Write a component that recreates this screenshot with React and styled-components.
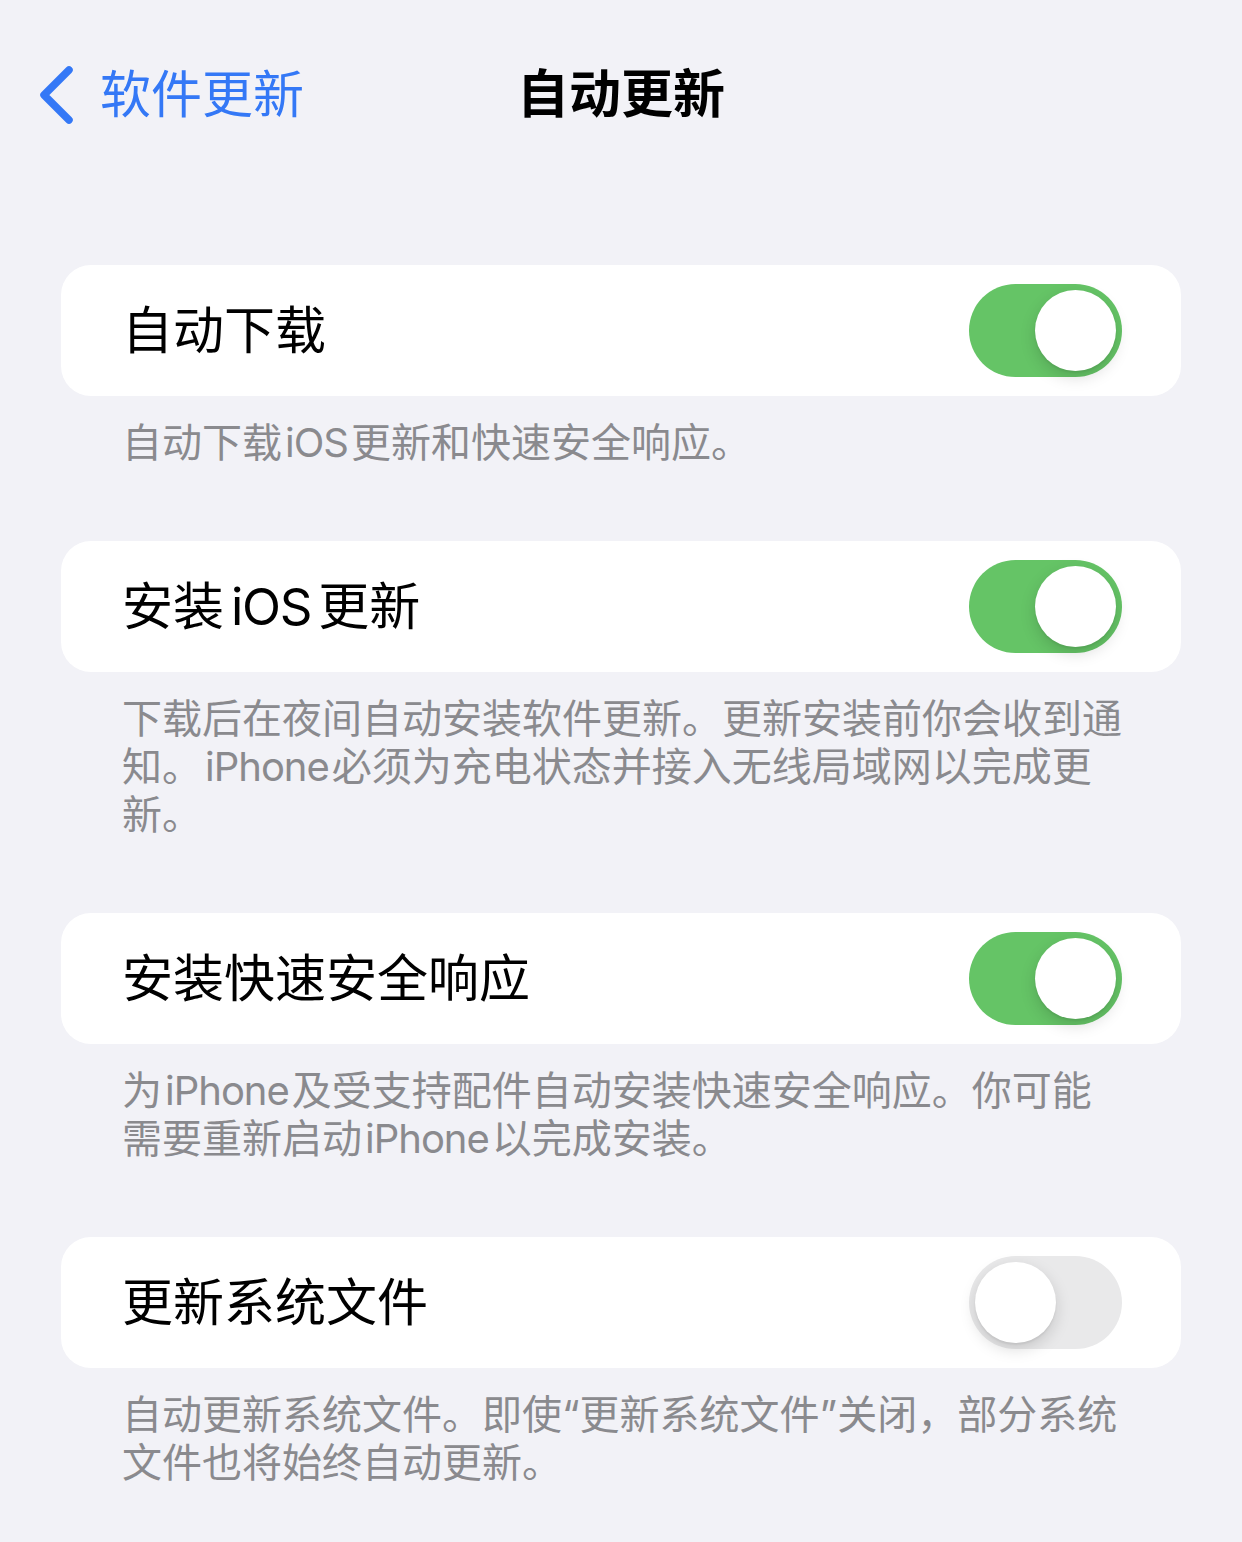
import React, { useState } from "react";
import styled, { createGlobalStyle } from "styled-components";

const GlobalStyle = createGlobalStyle`
  html, body {
    margin: 0;
    padding: 0;
    background: #f2f2f7;
  }
  body {
    font-family: "Inter", "Noto Sans CJK SC", "Noto Sans", sans-serif;
    -webkit-font-smoothing: antialiased;
  }
`;

const Page = styled.div`
  min-height: 100vh;
  background: #f2f2f7;
  display: flex;
  flex-direction: column;
`;

const NavBar = styled.header`
  position: relative;
  height: 190px;
  display: flex;
  align-items: center;
  justify-content: center;
`;

const BackButton = styled.button`
  position: absolute;
  left: 38px;
  top: 50%;
  transform: translateY(-50%);
  display: flex;
  align-items: center;
  gap: 26px;
  background: none;
  border: none;
  padding: 0;
  color: #3478f6;
  font-family: inherit;
  font-size: 51px;
  line-height: 60px;
  cursor: pointer;
`;

const Title = styled.h1`
  margin: 0;
  font-size: 52px;
  font-weight: 700;
  color: #000;
  line-height: 60px;
`;

const Content = styled.main`
  padding: 75px 61px 40px;
  display: flex;
  flex-direction: column;
`;

const Section = styled.section`
  display: flex;
  flex-direction: column;
`;

const Card = styled.div`
  background: #fff;
  border-radius: 30px;
  height: 131px;
  display: flex;
  align-items: center;
  justify-content: space-between;
  padding: 0 59px 0 61px;
`;

const Label = styled.span`
  font-size: 51px;
  color: #000;
  line-height: 60px;
`;

/* Latin runs inside Chinese text get a little breathing room, as iOS does */
const Latin = styled.span`
  margin: 0 ${(p) => p.$gap}px;
  letter-spacing: -0.025em;
`;

const Footer = styled.p`
  margin: 0;
  padding: 23px 55px 74px 61px;
  font-size: 40px;
  line-height: 48px;
  color: #8a8a8e;
`;

const Track = styled.button`
  position: relative;
  width: 153px;
  height: 93px;
  border: none;
  border-radius: 47px;
  padding: 0;
  background: ${(p) => (p.$on ? "#65c466" : "#e9e9ea")};
  cursor: pointer;
  flex-shrink: 0;
`;

const Knob = styled.span`
  position: absolute;
  top: 6px;
  left: ${(p) => (p.$on ? "66px" : "6px")};
  width: 81px;
  height: 81px;
  border-radius: 50%;
  background: #fff;
  box-shadow: 0 6px 16px rgba(0, 0, 0, 0.15), 0 2px 2px rgba(0, 0, 0, 0.06);
`;

function Toggle({ on, onChange }) {
  return (
    <Track $on={on} onClick={() => onChange(!on)} aria-pressed={on}>
      <Knob $on={on} />
    </Track>
  );
}

function Chevron() {
  return (
    <svg width="36" height="58" viewBox="0 0 36 58" fill="none">
      <path
        d="M31 4 L6 29 L31 54"
        stroke="#3478f6"
        strokeWidth="7.5"
        strokeLinecap="round"
        strokeLinejoin="round"
      />
    </svg>
  );
}

// Split mixed text so Latin words sit slightly apart from the CJK around them.
function Mixed({ text, gap }) {
  return text.split(/([A-Za-z]+)/).map((part, i) =>
    /^[A-Za-z]+$/.test(part) ? (
      <Latin key={i} $gap={gap}>
        {part}
      </Latin>
    ) : (
      part
    )
  );
}

const rows = [
  {
    key: "download",
    label: "自动下载",
    note: "自动下载iOS更新和快速安全响应。",
    on: true,
  },
  {
    key: "install",
    label: "安装iOS更新",
    note:
      "下载后在夜间自动安装软件更新。更新安装前你会收到通知。iPhone必须为充电状态并接入无线局域网以完成更新。",
    on: true,
  },
  {
    key: "rsr",
    label: "安装快速安全响应",
    note: "为iPhone及受支持配件自动安装快速安全响应。你可能需要重新启动iPhone以完成安装。",
    on: true,
  },
  {
    key: "sysfiles",
    label: "更新系统文件",
    note: "自动更新系统文件。即使“更新系统文件”关闭，部分系统文件也将始终自动更新。",
    on: false,
  },
];

export default function App() {
  const [state, setState] = useState(
    Object.fromEntries(rows.map((r) => [r.key, r.on]))
  );

  return (
    <Page>
      <GlobalStyle />
      <NavBar>
        <BackButton>
          <Chevron />
          软件更新
        </BackButton>
        <Title>自动更新</Title>
      </NavBar>
      <Content>
        {rows.map((r) => (
          <Section key={r.key}>
            <Card>
              <Label>
                <Mixed text={r.label} gap={7} />
              </Label>
              <Toggle
                on={state[r.key]}
                onChange={(v) => setState((s) => ({ ...s, [r.key]: v }))}
              />
            </Card>
            <Footer>
              <Mixed text={r.note} gap={3} />
            </Footer>
          </Section>
        ))}
      </Content>
    </Page>
  );
}
